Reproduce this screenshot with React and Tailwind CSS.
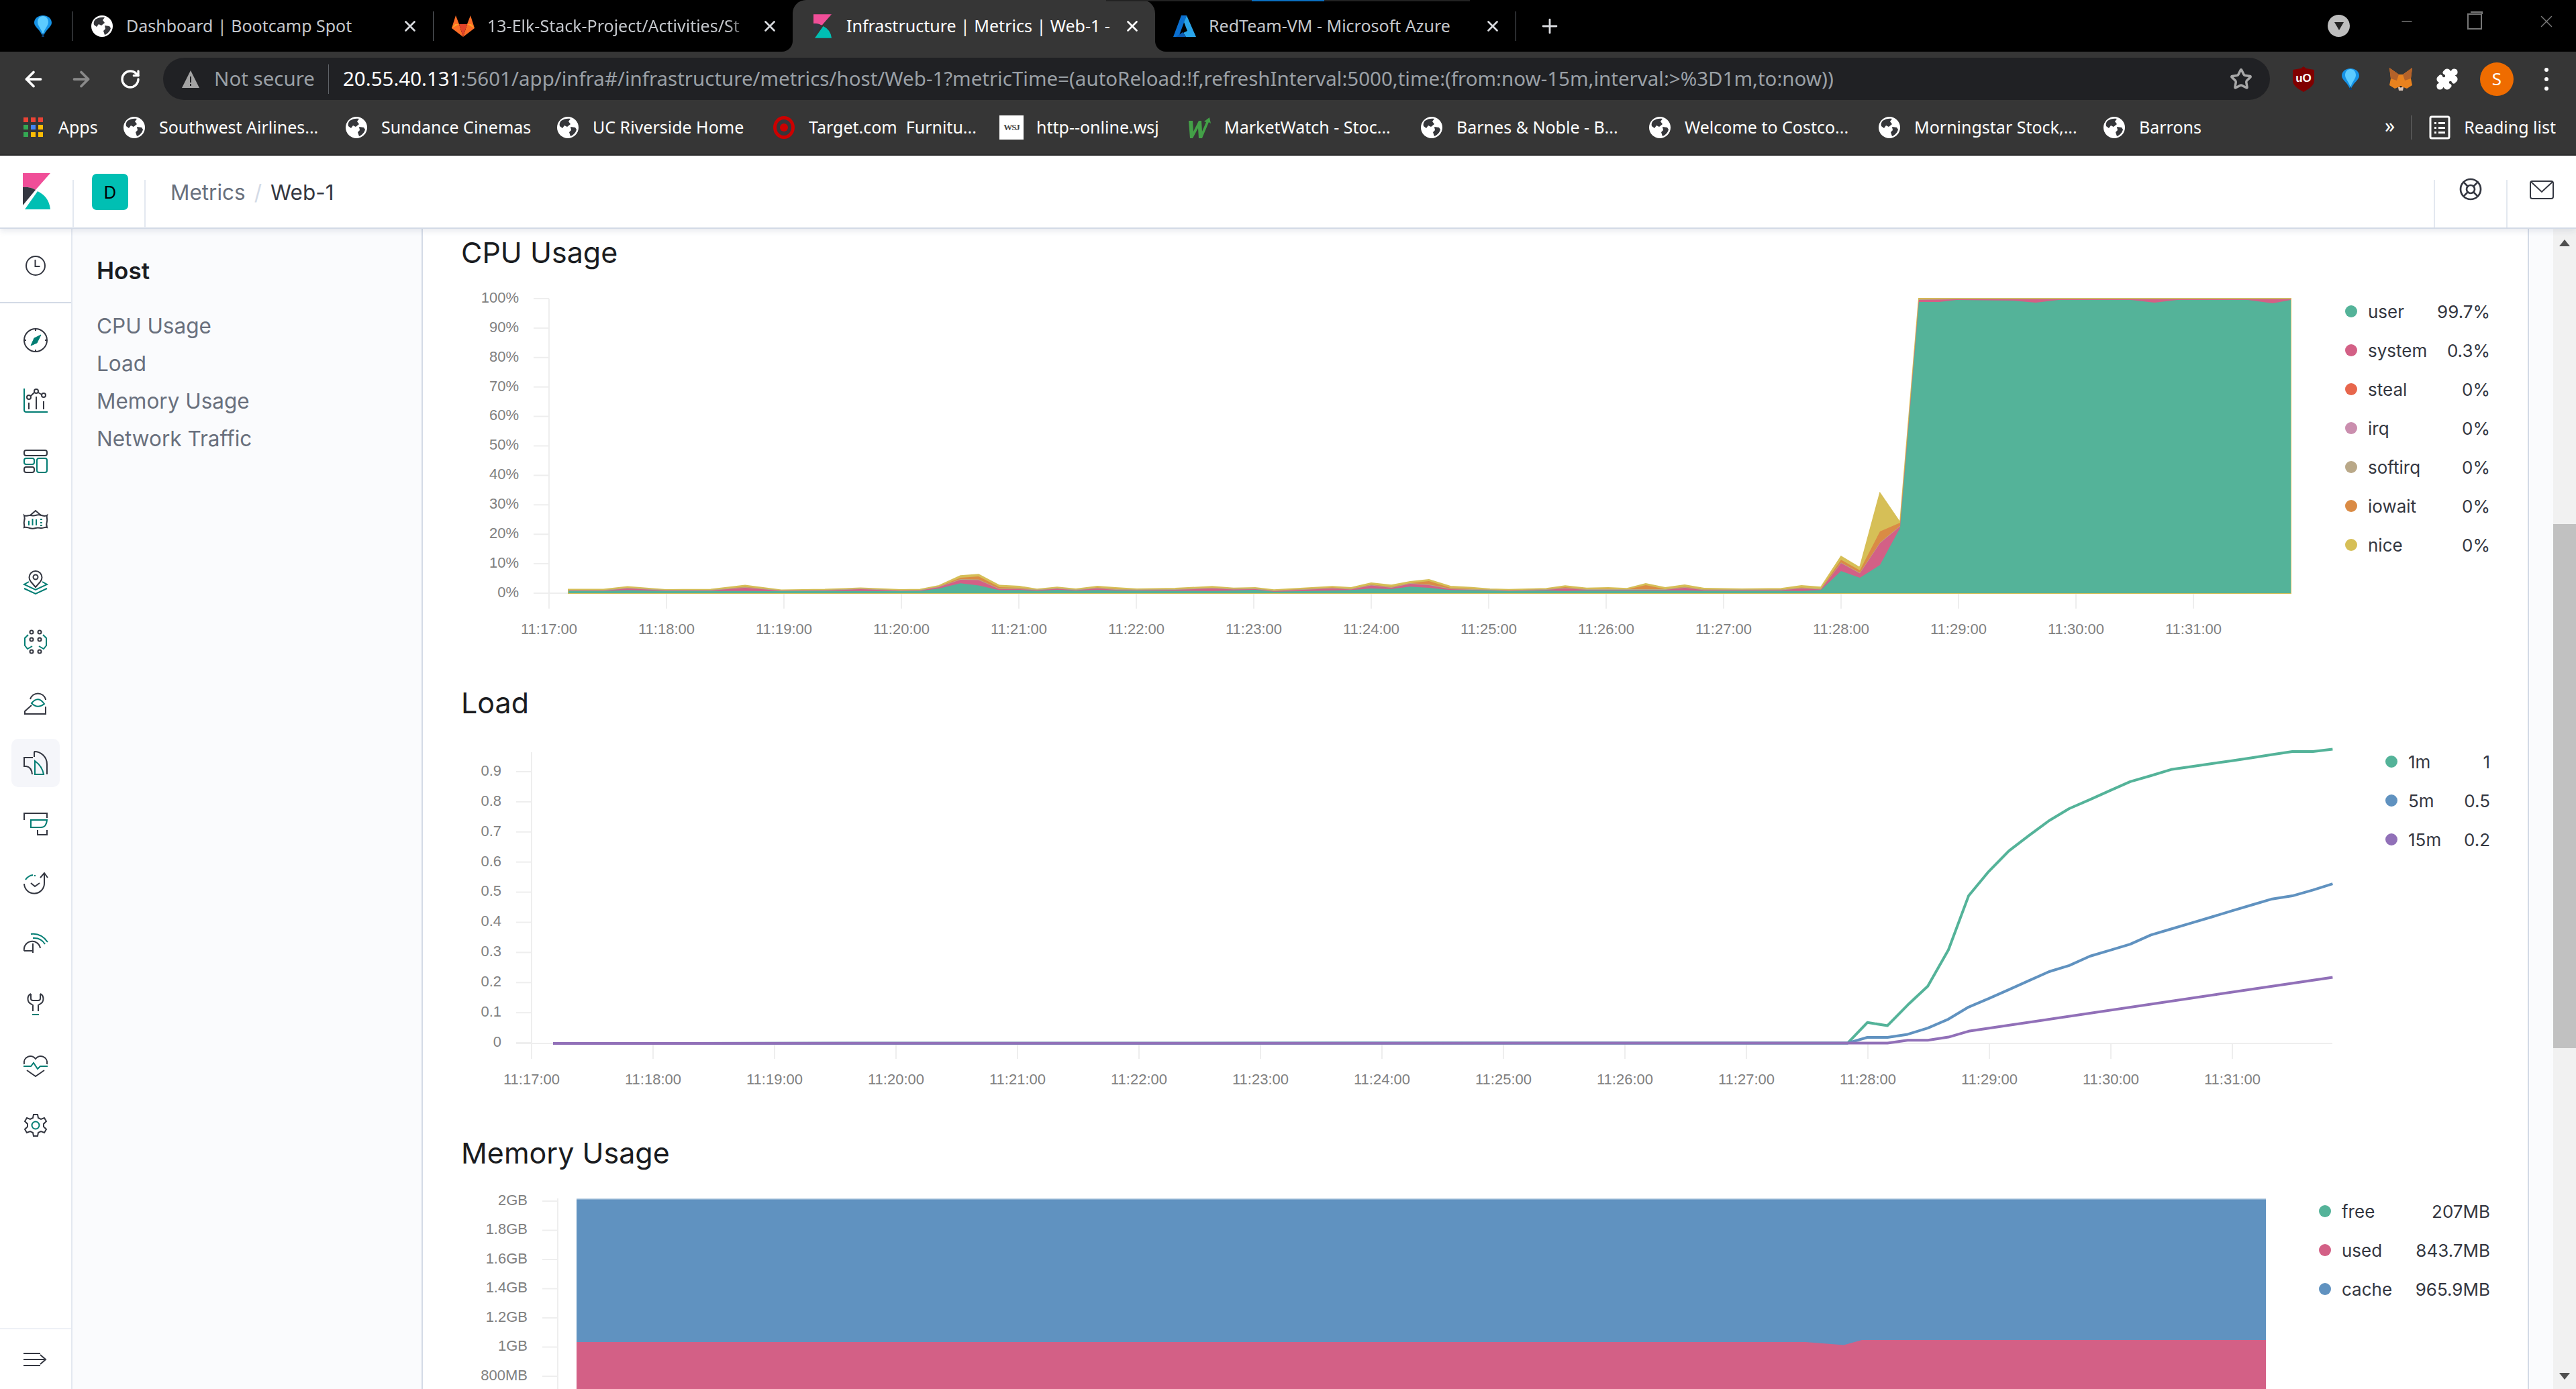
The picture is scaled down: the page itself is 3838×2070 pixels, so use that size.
import React from "react";
import { ArrowLeft, ArrowRight, RotateCw, Star, X, Plus, Puzzle, LifeBuoy, Minus } from "lucide-react";

const DARK = "#343741";
const TEAL = "#017d73";
const GREEN = "#54b399";
const PINK = "#d36086";
const BLUE = "#6092c0";
const PURPLE = "#9170b8";
const ORANGE = "#da8b45";
const YELLOW = "#d6bf57";

/* ---------- browser favicons ---------- */
const Globe = () => (
  <svg width="32" height="32" viewBox="0 0 32 32" className="shrink-0">
    <circle cx="16" cy="16" r="16" fill="#fff" />
    <path d="M6 6c4-3 10-4 14-3l-3 4 3 4-5 4-4-2-3 4-4-3c-1-3 0-6 2-8z" fill="#35363a" />
    <path d="M20 15l7 1 2 3c-1 4-4 8-9 10l-2-6 3-3z" fill="#35363a" />
  </svg>
);

const Balloon = ({ w = 28, h = 32 }) => (
  <svg width={w} height={h} viewBox="0 0 28 32" className="shrink-0">
    <path d="M14 0C6 0 1 5 1 11c0 6 9 10 13 21 4-11 13-15 13-21C27 5 22 0 14 0z" fill="#1592e6" />
    <path d="M14 1C9 1 6 5 6 10c0 5 5 9 8 18 3-9 8-13 8-18 0-5-3-9-8-9z" fill="#5ccbff" />
    <path d="M12 32h4l-2-6z" fill="#0d3f73" />
  </svg>
);

const Gitlab = () => (
  <svg width="36" height="33" viewBox="0 0 36 33" className="shrink-0">
    <path d="M18 33L1 20 7 1l5 13z" fill="#fc6d26" />
    <path d="M18 33l17-13L29 1l-5 13z" fill="#fc6d26" />
    <path d="M18 33l-6-19h12z" fill="#e24329" />
    <path d="M1 20l11-6-6 0z" fill="#fca326" />
    <path d="M35 20l-11-6 6 0z" fill="#fca326" />
  </svg>
);

const KibanaLogo = ({ w = 41, h = 54 }) => (
  <svg width={w} height={h} viewBox="0 0 41 54" className="shrink-0">
    <path d="M0 0h41L19 25Q10 20 0 21z" fill="#f04e98" />
    <path d="M0 21q10-1 19 4L0 48z" fill="#343741" />
    <path d="M3 54l19-27q17 8 19 27z" fill="#00bfb3" />
  </svg>
);

const Azure = () => (
  <svg width="34" height="32" viewBox="0 0 34 32" className="shrink-0">
    <path d="M12 0h8L8 32H0z" fill="#0a6fd0" />
    <path d="M20 0l14 32H19L15 26l6-3-5-13z" fill="#2aa5ea" />
    <path d="M4 32l10-7 5 7z" fill="#0a5cb5" />
  </svg>
);

const AppsGrid = () => (
  <svg width="30" height="30" viewBox="0 0 30 30" className="shrink-0">
    {[
      [0, 0, "#ea4335"], [11, 0, "#ea4335"], [22, 0, "#ea4335"],
      [0, 11, "#34a853"], [11, 11, "#4285f4"], [22, 11, "#fbbc04"],
      [0, 22, "#34a853"], [11, 22, "#fbbc04"], [22, 22, "#fbbc04"],
    ].map(([x, y, c], i) => (
      <rect key={i} x={x} y={y} width="7" height="7" fill={c} />
    ))}
  </svg>
);

const Target = () => (
  <svg width="34" height="36" viewBox="0 0 34 36" className="shrink-0">
    <ellipse cx="17" cy="18" rx="16" ry="17" fill="#cc0000" />
    <ellipse cx="17" cy="18" rx="11" ry="12" fill="#35363a" />
    <ellipse cx="17" cy="18" rx="6" ry="6" fill="#cc0000" />
  </svg>
);

const Wsj = () => (
  <div className="w-[36px] h-[36px] shrink-0 bg-white flex items-center justify-center text-[#444] text-[13px] font-bold font-['Liberation_Serif',serif] tracking-[-1px]">
    WSJ
  </div>
);

const MarketW = () => (
  <svg width="36" height="32" viewBox="0 0 36 32" className="shrink-0">
    <path d="M2 6h6l1 16 8-16h4l1 16 6-14-3-1 8-6 2 9-3-2-10 24h-5l-1-15-8 15H4z" fill="#43a047" />
  </svg>
);

const Fox = () => (
  <svg width="36" height="34" viewBox="0 0 36 34">
    <path d="M1 0l14 10h6L35 0l-2 16 2 10-8 5-5-2h-8l-5 2-8-5 2-10z" fill="#e8821e" />
    <path d="M1 0l14 10-3 9-9-3zM35 0L21 10l3 9 9-3z" fill="#b4622a" />
    <path d="M14 29h8l-1 5h-6z" fill="#d7c1b3" />
    <path d="M16 27h4l-2 3z" fill="#222" />
  </svg>
);

const UBlock = () => (
  <svg width="34" height="38" viewBox="0 0 34 38">
    <path d="M17 0l4 3 12 2v16c0 8-9 13-16 17C10 34 1 29 1 21V5l12-2z" fill="#800000" />
    <text x="17" y="23" textAnchor="middle" className="fill-white text-[17px] font-bold font-['Liberation_Sans',sans-serif]">uO</text>
  </svg>
);

/* ---------- kibana nav icons, all drawn in a 36 box ---------- */
const D = ({ d }) => <path d={d} stroke={DARK} />;
const T = ({ d }) => <path d={d} stroke={TEAL} />;

const navIcons = {
  clock: (
    <>
      <circle cx="18" cy="18" r="14" stroke={DARK} />
      <D d="M17.5 9v10h7" />
    </>
  ),
  compass: (
    <>
      <circle cx="18" cy="18" r="17" stroke={DARK} />
      <D d="M18 1v3M18 32v3M1 18h3M32 18h3" />
      <path d="M26 10l-6 12-9 4 5-11z" stroke={TEAL} fill={TEAL} strokeWidth="1" />
    </>
  ),
  visualize: (
    <>
      <T d="M1 0v32a3 3 0 0 0 3 3h32" />
      <D d="M8 21v10M19 12v19M30 19v12M11 11l5-5M22 6l5 3" />
      <circle cx="8" cy="13" r="3" stroke={DARK} />
      <circle cx="19" cy="4" r="3" stroke={DARK} />
      <circle cx="30" cy="10" r="3" stroke={DARK} />
    </>
  ),
  dashboard: (
    <>
      <rect x="1" y="2" width="34" height="8" rx="3" stroke={DARK} />
      <rect x="1" y="14" width="15" height="9" rx="3" stroke={TEAL} />
      <rect x="20" y="14" width="15" height="21" rx="3" stroke={TEAL} />
      <rect x="1" y="27" width="15" height="8" rx="3" stroke={DARK} />
    </>
  ),
  canvas: (
    <>
      <D d="M10 9l8-7 8 7" />
      <D d="M1 9c3 2 5 0 8 0s6 1 9 0 6-1 9 0 5 2 8 0c-1 3 1 6 0 9s-1 6 0 9c-3-1-5 1-8 1s-6-1-9 0-6 1-9 0-5-2-8-1c1-3-1-6 0-9s1-6 0-9z" />
      <T d="M8 17v7M13.5 14v10M19 15v9M25 15h3M25 20h3M25 24h3" />
    </>
  ),
  maps: (
    <>
      <D d="M18 26l-7-8a9.500 9.500 0 1 1 14 0z" />
      <circle cx="18" cy="11" r="3.500" stroke={DARK} />
      <T d="M8 18l-7 4 17 8 17-8-7-4M1 28l17 8 17-8" />
    </>
  ),
  ml: (
    <>
      {[[12, 3], [24, 3], [12, 14], [24, 14], [12, 32], [24, 32]].map(([x, y]) => (
        <circle key={`${x}-${y}`} cx={x} cy={y} r="2.500" stroke={DARK} />
      ))}
      <T d="M7 7l-5 5v11l4 5 7-4M29 7l5 5v11l-4 5-7-4" />
    </>
  ),
  metrics: (
    <>
      <D d="M10 13a12 12 0 0 1 23 0v1M33 24v11H2v-4l10-9" />
      <T d="M12 19q10-12 19 1-10 8-19-1z" />
    </>
  ),
  infra: (
    <>
      <D d="M14 10H1v13h3q8 1 9 12M16 1v8M16 1a19 19 0 0 1 19 19v15" />
      <T d="M17 15v20h13Q28 23 17 15z" />
    </>
  ),
  logs: (
    <>
      <D d="M1 13V3h34v7M21 28v7h14v-7" />
      <T d="M11 13h24q-1 11-9 11H11z" />
    </>
  ),
  apm: (
    <>
      <D d="M1 18a15 15 0 0 0 30-1V3M25 9l6-7 5 7M11 17l6 5 7-5" />
      <T d="M3 12q4-6 11-7M16 6h2" />
    </>
  ),
  uptime: (
    <>
      <T d="M11 3q15-2 25 12M14 9q12-1 18 9" />
      <D d="M1 28a12 12 0 0 1 24-4M14 17v14M1 28h12" />
    </>
  ),
  dev: (
    <>
      <D d="M11 2C5 5 5 14 11 17l3 2v9M25 2c6 3 6 12 0 15l-3 2v9M11 2v7q0 3 3 3h8q3 0 3-3V2" />
      <T d="M13 33h10" />
    </>
  ),
  monitor: (
    <>
      <D d="M5 26l13 9 13-9M1 17C-1 6 12 1 18 9c6-8 19-3 17 8" />
      <T d="M0 20h11l4-5 6 9 4-4h11" />
    </>
  ),
  gear: (
    <>
      <D d="M15 2h6l1 5 4 2 5-2 3 5-4 4v4l4 4-3 5-5-2-4 2-1 5h-6l-1-5-4-2-5 2-3-5 4-4v-4l-4-4 3-5 5 2 4-2z" />
      <circle cx="18" cy="18" r="5.500" stroke={TEAL} />
    </>
  ),
  collapse: <D d="M0 9h25M0 18h32M0 27h25M25 11l8 7-8 7" />,
};

const NavIcon = ({ name }) => (
  <svg width="36" height="36" viewBox="0 0 36 36" fill="none" strokeWidth="2" className="shrink-0 overflow-visible">
    {navIcons[name]}
  </svg>
);

/* ---------- chart data, page coordinates ---------- */
// [x, green top, pink top, orange top, yellow top] as heights above the 0% line
const cpu = [
  [848, 3.300, 3.800, 4.500, 5.500], [900, 3.300, 3.800, 4.500, 5.500], [936, 4.500, 7, 8, 9.400], [993, 3.300, 4, 4.500, 5],
  [1060, 3.300, 4, 4.500, 5.500], [1111, 3.300, 8, 9.500, 11.400], [1165, 3, 3.500, 4, 4.500], [1230, 3.300, 4, 4.600, 5.500],
  [1283, 3.300, 6, 6.800, 7.500], [1343, 3, 3.500, 4.200, 5], [1372, 3.300, 4, 4.600, 5.500], [1400, 7, 9, 10, 11],
  [1432, 14.700, 20, 23, 25.700], [1459, 11.500, 19.600, 25, 27.700], [1490, 4.500, 6, 9, 11.400], [1520, 4.700, 6, 8, 10],
  [1546, 3.500, 4.500, 5, 5.700], [1576, 5, 6.500, 7.500, 8.700], [1604, 3.700, 4.500, 5, 6], [1636, 4.700, 7, 8.500, 10],
  [1663, 4, 5, 6.500, 8], [1695, 3.700, 4.500, 5, 6], [1752, 3.500, 5, 6, 7], [1807, 3.300, 7, 8, 9.700],
  [1839, 4, 5.500, 6.500, 7.300], [1871, 5, 6, 7, 8], [1899, 2.300, 3, 4, 4.700], [1986, 4, 7, 8.500, 9.700],
  [2014, 4.700, 5.500, 6.500, 8], [2044, 7, 11.500, 13, 15], [2074, 6.300, 8, 9.500, 11.700], [2102, 9.700, 14, 15, 17],
  [2130, 8, 12, 18, 20], [2162, 4.700, 6, 8, 10], [2194, 4.500, 5, 6.500, 8.300], [2221, 4, 4.500, 5, 6],
  [2249, 3, 3.500, 4.500, 5.300], [2305, 4, 5, 6, 6.700], [2333, 3.300, 7, 9, 10.700], [2365, 4, 5, 6, 7.300],
  [2397, 4, 5, 6.500, 8], [2425, 4, 5, 5.500, 6.700], [2453, 4, 5, 12, 14], [2482, 4, 5, 6, 8],
  [2511, 4, 8, 9.500, 12], [2540, 3.500, 4.500, 5.500, 7], [2596, 3.500, 4.500, 5, 6], [2655, 3.500, 4.500, 5.500, 6.700],
  [2685, 3.300, 7, 8.500, 11], [2714, 4.700, 5.500, 6.500, 8.700], [2744, 33, 44.800, 49.700, 54.700],
  [2772, 23, 29.500, 34, 38], [2802, 42, 74.600, 92, 149], [2832, 97.600, 99.500, 105, 105],
  [2860, 434, 437, 438.500, 439], [2890, 434, 437.500, 438.500, 439], [2916, 437, 438, 438.500, 439],
  [3000, 436, 438, 438.500, 439], [3034, 433, 438, 438.500, 439], [3068, 437, 438, 438.500, 439],
  [3176, 437, 438, 438.500, 439], [3211, 433, 438, 438.500, 439], [3245, 437, 438, 438.500, 439],
  [3350, 437, 438, 438.500, 439], [3387, 432, 438, 438.500, 439], [3414, 437, 438, 438.500, 439],
];

const CPU_BASE = 884;
const cpuArea = (col, lift = 0) =>
  `M848 ${CPU_BASE} ` + cpu.map((p) => `L${p[0]} ${CPU_BASE - p[col] - lift}`).join(" ") + ` L3414 ${CPU_BASE} Z`;

// line points were read in crop units of the load chart
const fromCrop = (pts) =>
  pts.map(([x, y]) => `${(2600 + x / 1.2666).toFixed(1)},${(1050 + y / 2.613).toFixed(1)}`).join(" ");

const load1 = "825,1555 " + fromCrop([
  [195, 1318], [232, 1238], [270, 1250], [308, 1170], [346, 1097], [385, 955], [423, 745], [461, 650], [499, 570],
  [537, 510], [575, 452], [613, 405], [652, 370], [690, 335], [728, 300], [767, 277], [805, 253], [843, 242],
  [882, 230], [920, 219], [958, 207], [996, 195], [1034, 183], [1073, 183], [1110, 174],
]);
const load5 = "825,1555 " + fromCrop([
  [195, 1318], [232, 1296], [270, 1296], [308, 1284], [346, 1260], [385, 1225], [423, 1178], [461, 1145], [499, 1110],
  [537, 1075], [575, 1040], [613, 1016], [652, 980], [690, 957], [728, 933], [767, 897], [805, 874], [843, 851],
  [882, 827], [920, 803], [958, 780], [996, 757], [1034, 745], [1073, 722], [1110, 698],
]);
const load15 = "825,1555 " + fromCrop([
  [270, 1318], [308, 1307], [346, 1307], [385, 1295], [423, 1272], [1110, 1062],
]);

const minutes = ["11:17:00", "11:18:00", "11:19:00", "11:20:00", "11:21:00", "11:22:00", "11:23:00", "11:24:00", "11:25:00", "11:26:00", "11:27:00", "11:28:00", "11:29:00", "11:30:00", "11:31:00"];
const AXIS_TEXT = "fill-[#808080] text-[22px] font-['Liberation_Sans',sans-serif]";
const GRID = "#eeeeee";

const YTick = ({ label, x, y }) => (
  <>
    <line x1={x - 23} x2={x} y1={y} y2={y} stroke={GRID} strokeWidth="2" />
    <text x={x - 45} y={y} textAnchor="end" dominantBaseline="middle" className={AXIS_TEXT}>{label}</text>
  </>
);

const XTicks = ({ x0, step, top, bottom, labelY }) =>
  minutes.map((m, i) => (
    <g key={m}>
      <line x1={x0 + i * step} x2={x0 + i * step} y1={top} y2={bottom} stroke={GRID} strokeWidth="2" />
      <text x={x0 + i * step} y={labelY} textAnchor="middle" dominantBaseline="middle" className={AXIS_TEXT}>{m}</text>
    </g>
  ));

const CpuChart = () => (
  <svg width="2760" height="601" viewBox="688 411 2760 601" className="block shrink-0">
    <line x1="819" x2="819" y1="445" y2="884" stroke={GRID} strokeWidth="2" />
    {["100%", "90%", "80%", "70%", "60%", "50%", "40%", "30%", "20%", "10%", "0%"].map((l, i) => (
      <YTick key={l} label={l} x={819} y={445 + i * 43.9} />
    ))}
    <line x1="796" x2="3414" y1="884" y2="884" stroke={GRID} strokeWidth="2" />
    <XTicks x0={819} step={175} top={884} bottom={907} labelY={939} />
    <path d={cpuArea(4)} fill={YELLOW} stroke={YELLOW} strokeWidth="2" />
    <path d={cpuArea(3)} fill={ORANGE} />
    <path d={cpuArea(2, 1)} fill="#b9a888" />
    <path d={cpuArea(2)} fill={PINK} />
    <path d={cpuArea(1)} fill={GREEN} />
  </svg>
);

const LoadChart = () => (
  <svg width="2760" height="601" viewBox="688 1082 2760 601" className="block shrink-0 overflow-visible">
    <line x1="793" x2="793" y1="1121" y2="1555" stroke={GRID} strokeWidth="2" />
    {["0.9", "0.8", "0.7", "0.6", "0.5", "0.4", "0.3", "0.2", "0.1", "0"].map((l, i) => (
      <YTick key={l} label={l} x={793} y={1150 + i * 44.9} />
    ))}
    <line x1="770" x2="3476" y1="1555" y2="1555" stroke={GRID} strokeWidth="2" />
    <XTicks x0={793} step={181} top={1555} bottom={1578} labelY={1610} />
    <g fill="none" strokeWidth="4" strokeLinejoin="round">
      <polyline points={load1} stroke={GREEN} />
      <polyline points={load5} stroke={BLUE} />
      <polyline points={load15} stroke={PURPLE} />
    </g>
  </svg>
);

const MemoryChart = () => (
  <svg width="2760" height="317" viewBox="688 1753 2760 317" className="block shrink-0">
    <line x1="832" x2="832" y1="1786" y2="2070" stroke={GRID} strokeWidth="2" />
    {["2GB", "1.8GB", "1.6GB", "1.4GB", "1.2GB", "1GB", "800MB"].map((l, i) => (
      <YTick key={l} label={l} x={832} y={1790 + i * 43.5} />
    ))}
    <rect x="860" y="1786" width="2517" height="284" fill={BLUE} />
    <rect x="860" y="1786" width="2517" height="1.500" fill="#b7cde2" />
    <path d="M860 2000H2691L2748 2004.500 2775 1997H3377V2070H860Z" fill={PINK} />
  </svg>
);

const Legend = ({ className, rows }) => (
  <div className={`flex-1 flex flex-col font-['Inter',sans-serif] text-[26px] text-[#343741] ${className}`}>
    {rows.map((r) => (
      <div key={r.label} className="flex items-center h-[58px]">
        <span className={`w-[18px] h-[18px] rounded-full shrink-0 ${r.dot}`} />
        <span className="ml-[16px]">{r.label}</span>
        <span className="ml-auto">{r.value}</span>
      </div>
    ))}
  </div>
);

const SectionTitle = ({ children }) => (
  <h2 className="h-[70px] flex items-center text-[43px] text-[#1a1c21] font-['Inter',sans-serif] font-normal">{children}</h2>
);

/* ---------- browser chrome data ---------- */
const bookmarks = [
  { icon: <AppsGrid />, label: "Apps", w: "w-[150px]" },
  { icon: <Globe />, label: "Southwest Airlines...", w: "w-[331px]" },
  { icon: <Globe />, label: "Sundance Cinemas", w: "w-[315px]" },
  { icon: <Globe />, label: "UC Riverside Home", w: "w-[322px]" },
  { icon: <Target />, label: "Target.com  Furnitu...", w: "w-[339px]" },
  { icon: <Wsj />, label: "http--online.wsj", w: "w-[280px]" },
  { icon: <MarketW />, label: "MarketWatch - Stoc...", w: "w-[346px]" },
  { icon: <Globe />, label: "Barnes & Noble - B...", w: "w-[340px]" },
  { icon: <Globe />, label: "Welcome to Costco...", w: "w-[342px]" },
  { icon: <Globe />, label: "Morningstar Stock,...", w: "w-[335px]" },
  { icon: <Globe />, label: "Barrons", w: "w-[200px]" },
];

const navItems = ["compass", "visualize", "dashboard", "canvas", "maps", "ml", "metrics", "infra", "logs", "apm", "uptime", "dev", "monitor", "gear"];

const Tab = ({ icon, title, w, active, fade }) => (
  <div className={`relative flex items-center h-[77px] pl-[26px] pr-[21px] ${w} ${active ? "bg-[#363636] rounded-t-[20px] text-white" : "text-[#c4c7cc]"}`}>
    {active && (
      <>
        <div className="absolute bottom-0 -left-[16px] w-[16px] h-[16px] bg-[#363636]">
          <div className="w-full h-full bg-black rounded-br-[16px]" />
        </div>
        <div className="absolute bottom-0 -right-[16px] w-[16px] h-[16px] bg-[#363636]">
          <div className="w-full h-full bg-black rounded-bl-[16px]" />
        </div>
      </>
    )}
    <span className="w-[36px] flex justify-center shrink-0">{icon}</span>
    <span className={`ml-[18px] flex-1 whitespace-nowrap text-[25px] ${fade ? "mask-r-from-90%" : ""}`}>{title}</span>
    <X size={26} strokeWidth={2.5} className={`shrink-0 ml-[12px] ${active ? "text-white" : "text-[#dadce0]"}`} />
  </div>
);

const TabSep = () => <div className="w-[1px] h-[44px] bg-[#5f6368] shrink-0" />;

export default function App() {
  return (
    <div className="w-[3838px] h-[2070px] overflow-hidden flex flex-col bg-white font-['Noto_Sans',sans-serif]">
      {/* tab strip */}
      <div className="relative h-[77px] bg-black flex items-center shrink-0">
        <div className="w-[107px] flex justify-center pl-[21px]"><Balloon /></div>
        <TabSep />
        <Tab icon={<Globe />} title="Dashboard | Bootcamp Spot" w="w-[537px]" />
        <TabSep />
        <Tab icon={<Gitlab />} title="13-Elk-Stack-Project/Activities/St" w="w-[535px]" fade />
        <Tab icon={<KibanaLogo w={27} h={36} />} title="Infrastructure | Metrics | Web-1 -" w="w-[540px]" active />
        <Tab icon={<Azure />} title="RedTeam-VM - Microsoft Azure" w="w-[537px]" />
        <TabSep />
        <Plus size={34} className="ml-[33px] text-[#dadce0]" />
        {/* screen capture strip at the very top */}
        <div className="absolute top-0 left-[1648px] w-[542px] h-[2px] bg-[#222] flex justify-center">
          <div className="w-[108px] h-[2px] bg-[#0a6fc0]" />
        </div>
        <div className="ml-auto flex items-center text-[#777]">
          <div className="w-[33px] h-[33px] rounded-full bg-[#bdbdbd] flex items-center justify-center mr-[73px]">
            <div className="w-0 h-0 border-l-[7px] border-r-[7px] border-t-[12px] border-l-transparent border-r-transparent border-t-[#222]" />
          </div>
          <Minus size={24} strokeWidth={1.5} className="mr-[78px] -mt-[13px]" />
          <div className="relative w-[22px] h-[24px] border-2 border-[#777] mr-[81px] -mt-[13px]">
            <div className="absolute -top-[5px] left-[3px] w-[18px] h-[4px] border-t-2 border-r-2 border-[#777]" />
          </div>
          <X size={30} strokeWidth={1.2} className="mr-[29px] -mt-[13px]" />
        </div>
      </div>

      {/* toolbar */}
      <div className="h-[72px] bg-[#363636] flex items-center shrink-0 pt-[9px]">
        <ArrowLeft size={36} strokeWidth={2.5} className="ml-[32px] text-white" />
        <ArrowRight size={36} strokeWidth={2.5} className="ml-[35px] text-[#8a8a8a]" />
        <RotateCw size={32} strokeWidth={2.5} className="ml-[39px] text-white" />
        <div className="ml-[33px] w-[3139px] h-[63px] rounded-full bg-[#202124] flex items-center pl-[27px] pr-[26px]">
          <svg width="28" height="28" viewBox="0 0 28 28" className="shrink-0">
            <path d="M14 1l13 26H1z" fill="#a3a3a3" />
            <path d="M13 10h2v9h-2zM13 21h2v3h-2z" fill="#202124" />
          </svg>
          <span className="ml-[21px] text-[29.5px] text-[#9aa0a6] whitespace-nowrap">Not secure</span>
          <div className="w-[1px] h-[44px] bg-[#5f6368] ml-[20px] shrink-0" />
          <span className="ml-[21px] text-[29.5px] text-[#9aa0a6] whitespace-nowrap">
            <span className="text-white">20.55.40.131</span>
            :5601/app/infra#/infrastructure/metrics/host/Web-1?metricTime=(autoReload:!f,refreshInterval:5000,time:(from:now-15m,interval:&gt;%3D1m,to:now))
          </span>
          <Star size={34} strokeWidth={2.5} className="ml-auto text-[#a8a8a8] shrink-0" />
        </div>
        <div className="ml-[33px] flex items-center"><UBlock /></div>
        <div className="ml-[39px]"><Balloon /></div>
        <div className="ml-[43px]"><Fox /></div>
        <Puzzle size={34} fill="#fff" className="ml-[34px] text-white" />
        <div className="ml-[32px] w-[50px] h-[50px] rounded-full bg-[#ef6c00] text-white text-[26px] flex items-center justify-center">S</div>
        <div className="ml-[46px] flex flex-col gap-[8px]">
          <div className="w-[6px] h-[6px] rounded-full bg-white" />
          <div className="w-[6px] h-[6px] rounded-full bg-white" />
          <div className="w-[6px] h-[6px] rounded-full bg-white" />
        </div>
      </div>

      {/* bookmarks */}
      <div className="h-[83px] bg-[#363636] border-b-2 border-[#2a2a2a] flex items-center pl-[32px] text-[25px] text-white shrink-0">
        {bookmarks.map((b) => (
          <div key={b.label} className={`flex items-center shrink-0 ${b.w}`}>
            <span className="w-[36px] flex justify-center">{b.icon}</span>
            <span className="ml-[19px] whitespace-pre">{b.label}</span>
          </div>
        ))}
        <span className="ml-auto text-[30px] leading-none -mt-[6px]">»</span>
        <div className="w-[1px] h-[36px] bg-[#666] ml-[24px]" />
        <svg width="32" height="36" viewBox="0 0 32 36" className="ml-[26px] shrink-0">
          <rect x="2" y="2" width="28" height="32" rx="2" fill="none" stroke="#fff" strokeWidth="3" />
          <path d="M8 10h3v3H8zM8 17h3v3H8zM8 24h3v3H8zM14 10h10v3H14zM14 17h10v3H14zM14 24h10v3H14z" fill="#fff" />
        </svg>
        <span className="ml-[20px] mr-[30px]">Reading list</span>
      </div>

      {/* kibana header */}
      <header className="h-[109px] bg-white border-b-2 border-[#d3dae6] shadow-[0_4px_8px_rgba(152,162,179,0.2)] flex shrink-0 relative z-10 font-['Inter',sans-serif]">
        <div className="w-[108px] flex justify-center pt-[26px]"><KibanaLogo /></div>
        <div className="w-[109px] mt-[36px] border-l-2 border-r-2 border-[#e3e8f0] -mb-px">
          <div className="-mt-[9px] ml-[27px] w-[54px] h-[54px] rounded-[7px] bg-[#00bfb3] flex items-center justify-center text-[26px] text-black">D</div>
        </div>
        <div className="flex items-start pt-[37px] pl-[37px] text-[31.5px] leading-[36px]">
          <span className="text-[#69707d]">Metrics</span>
          <span className="text-[#d3dae6] mx-[13px]">/</span>
          <span className="text-[#343741]">Web-1</span>
        </div>
        <div className="ml-auto flex">
          <div className="w-[108px] mt-[36px] border-l-2 border-[#e3e8f0] flex justify-center">
            <LifeBuoy size={36} strokeWidth={1.8} className="-mt-[4px] text-[#343741]" />
          </div>
          <div className="w-[104px] mt-[36px] border-l-2 border-[#e3e8f0] flex justify-center">
            <svg width="36" height="28" viewBox="0 0 36 28" fill="none" stroke="#343741" strokeWidth="2" className="mt-[1px]">
              <rect x="1" y="1" width="34" height="26" rx="3" />
              <path d="M2 2l16 15L34 2" />
            </svg>
          </div>
        </div>
      </header>

      {/* page */}
      <div className="flex-1 flex min-h-0">
        <nav className="w-[108px] bg-white border-r-2 border-[#e3e8f0] flex flex-col shrink-0">
          <div className="h-[111px] border-b-2 border-[#d3dae6] flex items-center justify-center shrink-0">
            <NavIcon name="clock" />
          </div>
          <div className="flex-1 pt-[10px]">
            {navItems.map((n) => (
              <div key={n} className="h-[90px] flex items-center justify-center">
                <div className={`w-[72px] h-[72px] rounded-[10px] flex items-center justify-center ${n === "infra" ? "bg-[#f5f6fa]" : ""}`}>
                  <NavIcon name={n} />
                </div>
              </div>
            ))}
          </div>
          <div className="h-[91px] border-t-2 border-[#eef1f6] flex items-center justify-center shrink-0">
            <NavIcon name="collapse" />
          </div>
        </nav>

        <aside className="w-[522px] bg-[#fafbfd] border-r-2 border-[#d3dae6] shrink-0 pl-[36px] font-['Inter',sans-serif]">
          <div className="h-[63px] mt-[31px] flex items-center text-[35px] font-semibold text-[#1a1c21]">Host</div>
          <ul className="mt-[23px] text-[31.5px] text-[#69707d]">
            <li className="h-[56px] flex items-center">CPU Usage</li>
            <li className="h-[56px] flex items-center">Load</li>
            <li className="h-[56px] flex items-center">Memory Usage</li>
            <li className="h-[56px] flex items-center">Network Traffic</li>
          </ul>
        </aside>

        <main className="flex-1 min-w-0 pl-[57px] pr-[56px] overflow-hidden">
          <section>
            <SectionTitle>CPU Usage</SectionTitle>
            <div className="flex">
              <CpuChart />
              <Legend
                className="pt-[24px] pl-[47px]"
                rows={[
                  { label: "user", value: "99.7%", dot: "bg-[#54b399]" },
                  { label: "system", value: "0.3%", dot: "bg-[#d36086]" },
                  { label: "steal", value: "0%", dot: "bg-[#e7664c]" },
                  { label: "irq", value: "0%", dot: "bg-[#ca8eae]" },
                  { label: "softirq", value: "0%", dot: "bg-[#b9a888]" },
                  { label: "iowait", value: "0%", dot: "bg-[#da8b45]" },
                  { label: "nice", value: "0%", dot: "bg-[#d6bf57]" },
                ]}
              />
            </div>
          </section>
          <section>
            <SectionTitle>Load</SectionTitle>
            <div className="flex">
              <LoadChart />
              <Legend
                className="pt-[24px] pl-[107px]"
                rows={[
                  { label: "1m", value: "1", dot: "bg-[#54b399]" },
                  { label: "5m", value: "0.5", dot: "bg-[#6092c0]" },
                  { label: "15m", value: "0.2", dot: "bg-[#9170b8]" },
                ]}
              />
            </div>
          </section>
          <section>
            <SectionTitle>Memory Usage</SectionTitle>
            <div className="flex">
              <MemoryChart />
              <Legend
                className="pt-[23px] pl-[8px]"
                rows={[
                  { label: "free", value: "207MB", dot: "bg-[#54b399]" },
                  { label: "used", value: "843.7MB", dot: "bg-[#d36086]" },
                  { label: "cache", value: "965.9MB", dot: "bg-[#6092c0]" },
                ]}
              />
            </div>
          </section>
        </main>

        <div className="w-[38px] bg-[#fafbfd] border-l-2 border-[#d3dae6] shrink-0" />
        <div className="relative w-[34px] bg-[#f1f1f1] shrink-0">
          <div className="mt-[440px] h-[781px] bg-[#c1c1c1]" />
          <div className="absolute top-[16px] left-[9px] w-0 h-0 border-l-[8px] border-r-[8px] border-b-[10px] border-l-transparent border-r-transparent border-b-[#505050]" />
          <div className="absolute bottom-[14px] left-[9px] w-0 h-0 border-l-[8px] border-r-[8px] border-t-[10px] border-l-transparent border-r-transparent border-t-[#505050]" />
        </div>
      </div>
    </div>
  );
}
